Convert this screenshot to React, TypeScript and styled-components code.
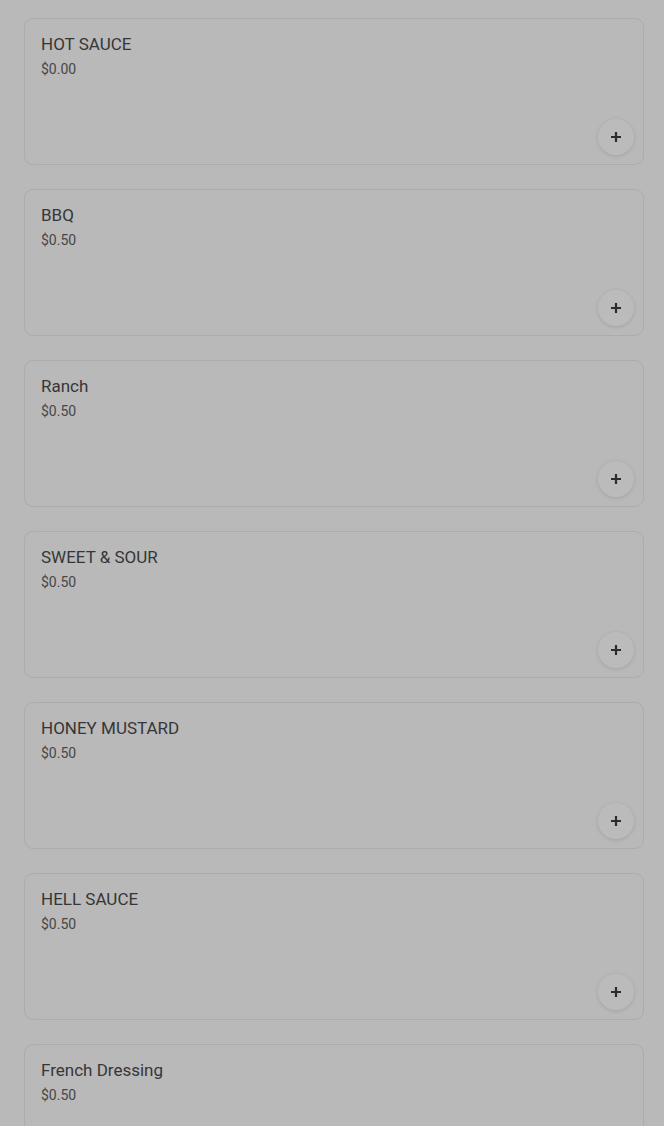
import styled, { createGlobalStyle } from "styled-components";

const GlobalStyle = createGlobalStyle`
  html, body {
    margin: 0;
    padding: 0;
    background: #b9b9b9;
    font-family: Roboto, "Liberation Sans", sans-serif;
  }
`;

const Page = styled.div`
  display: flex;
  flex-direction: column;
  gap: 24px;
  padding: 18px 20px 0 24px;
  height: 1126px;
  overflow: hidden;
  box-sizing: border-box;
`;

const Card = styled.div`
  display: flex;
  flex-direction: column;
  flex-shrink: 0;
  height: 147px;
  box-sizing: border-box;
  border: 1px solid #acacac;
  border-radius: 9px;
  background: #b9b9b9;
  padding: 13px 9px 9px 16px;
`;

const Title = styled.div`
  font-size: 17px;
  line-height: 24px;
  color: #363636;
`;

const Price = styled.div`
  margin-top: 3px;
  font-size: 14px;
  line-height: 20px;
  color: #474747;
`;

const Actions = styled.div`
  margin-top: auto;
  display: flex;
  justify-content: flex-end;
`;

const AddButton = styled.button`
  width: 36px;
  height: 36px;
  border-radius: 50%;
  border: 0;
  padding: 0;
  background: #bbbbbb;
  box-shadow: 0 1px 4px rgba(0, 0, 0, 0.12);
  display: flex;
  align-items: center;
  justify-content: center;
  color: #2c2c2c;
`;

const items = [
  { name: "HOT SAUCE", price: "$0.00" },
  { name: "BBQ", price: "$0.50" },
  { name: "Ranch", price: "$0.50" },
  { name: "SWEET & SOUR", price: "$0.50" },
  { name: "HONEY MUSTARD", price: "$0.50" },
  { name: "HELL SAUCE", price: "$0.50" },
  { name: "French Dressing", price: "$0.50" },
];

export default function App() {
  return (
    <>
      <GlobalStyle />
      <Page>
        {items.map((item) => (
          <Card key={item.name}>
            <Title>{item.name}</Title>
            <Price>{item.price}</Price>
            <Actions>
              <AddButton aria-label="add">
                <svg width="12" height="12" viewBox="0 0 12 12">
                  <path d="M6 1v10M1 6h10" stroke="currentColor" strokeWidth="2.2" />
                </svg>
              </AddButton>
            </Actions>
          </Card>
        ))}
      </Page>
    </>
  );
}
